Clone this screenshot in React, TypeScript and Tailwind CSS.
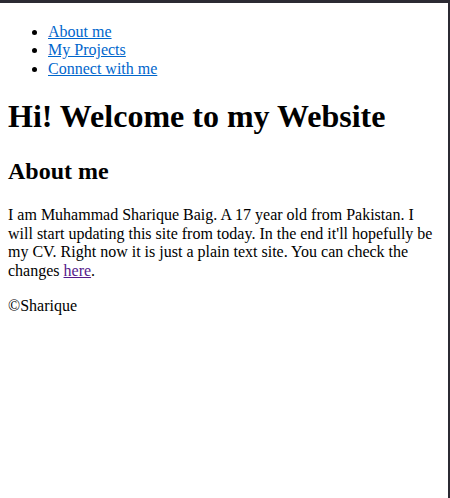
export default function App() {
  return (
    <div className="h-[498px] border-t-[3px] border-r-2 border-[#2b2a33] bg-white px-2 pb-2 font-['Liberation_Serif',serif] text-base leading-[18.7px] text-black">
      <ul className="mt-[19.5px] mb-[19.5px] list-disc pl-10 leading-[18.7px]">
        <li>
          <a href="#about" className="text-[#0066cc] underline">
            About me
          </a>
        </li>
        <li>
          <a href="#projects" className="text-[#0066cc] underline">
            My Projects
          </a>
        </li>
        <li>
          <a href="#connect" className="text-[#0066cc] underline">
            Connect with me
          </a>
        </li>
      </ul>

      <h1 className="mt-[19.5px] mb-[21.44px] text-[32px] leading-[37.4px] font-bold">
        Hi! Welcome to my Website
      </h1>

      <h2 className="my-[19.92px] text-2xl leading-[28px] font-bold">About me</h2>

      <p className="mt-[21px] mb-4 leading-[18.7px]">
        I am Muhammad Sharique Baig. A 17 year old from Pakistan. I will start
        updating this site from today. In the end it'll hopefully be my CV.
        Right now it is just a plain text site. You can check the changes{" "}
        <a href="#changes" className="text-[#551a8b] underline">
          here
        </a>
        .
      </p>

      <p className="my-[14px] leading-[18.7px]">©Sharique</p>
    </div>
  );
}
